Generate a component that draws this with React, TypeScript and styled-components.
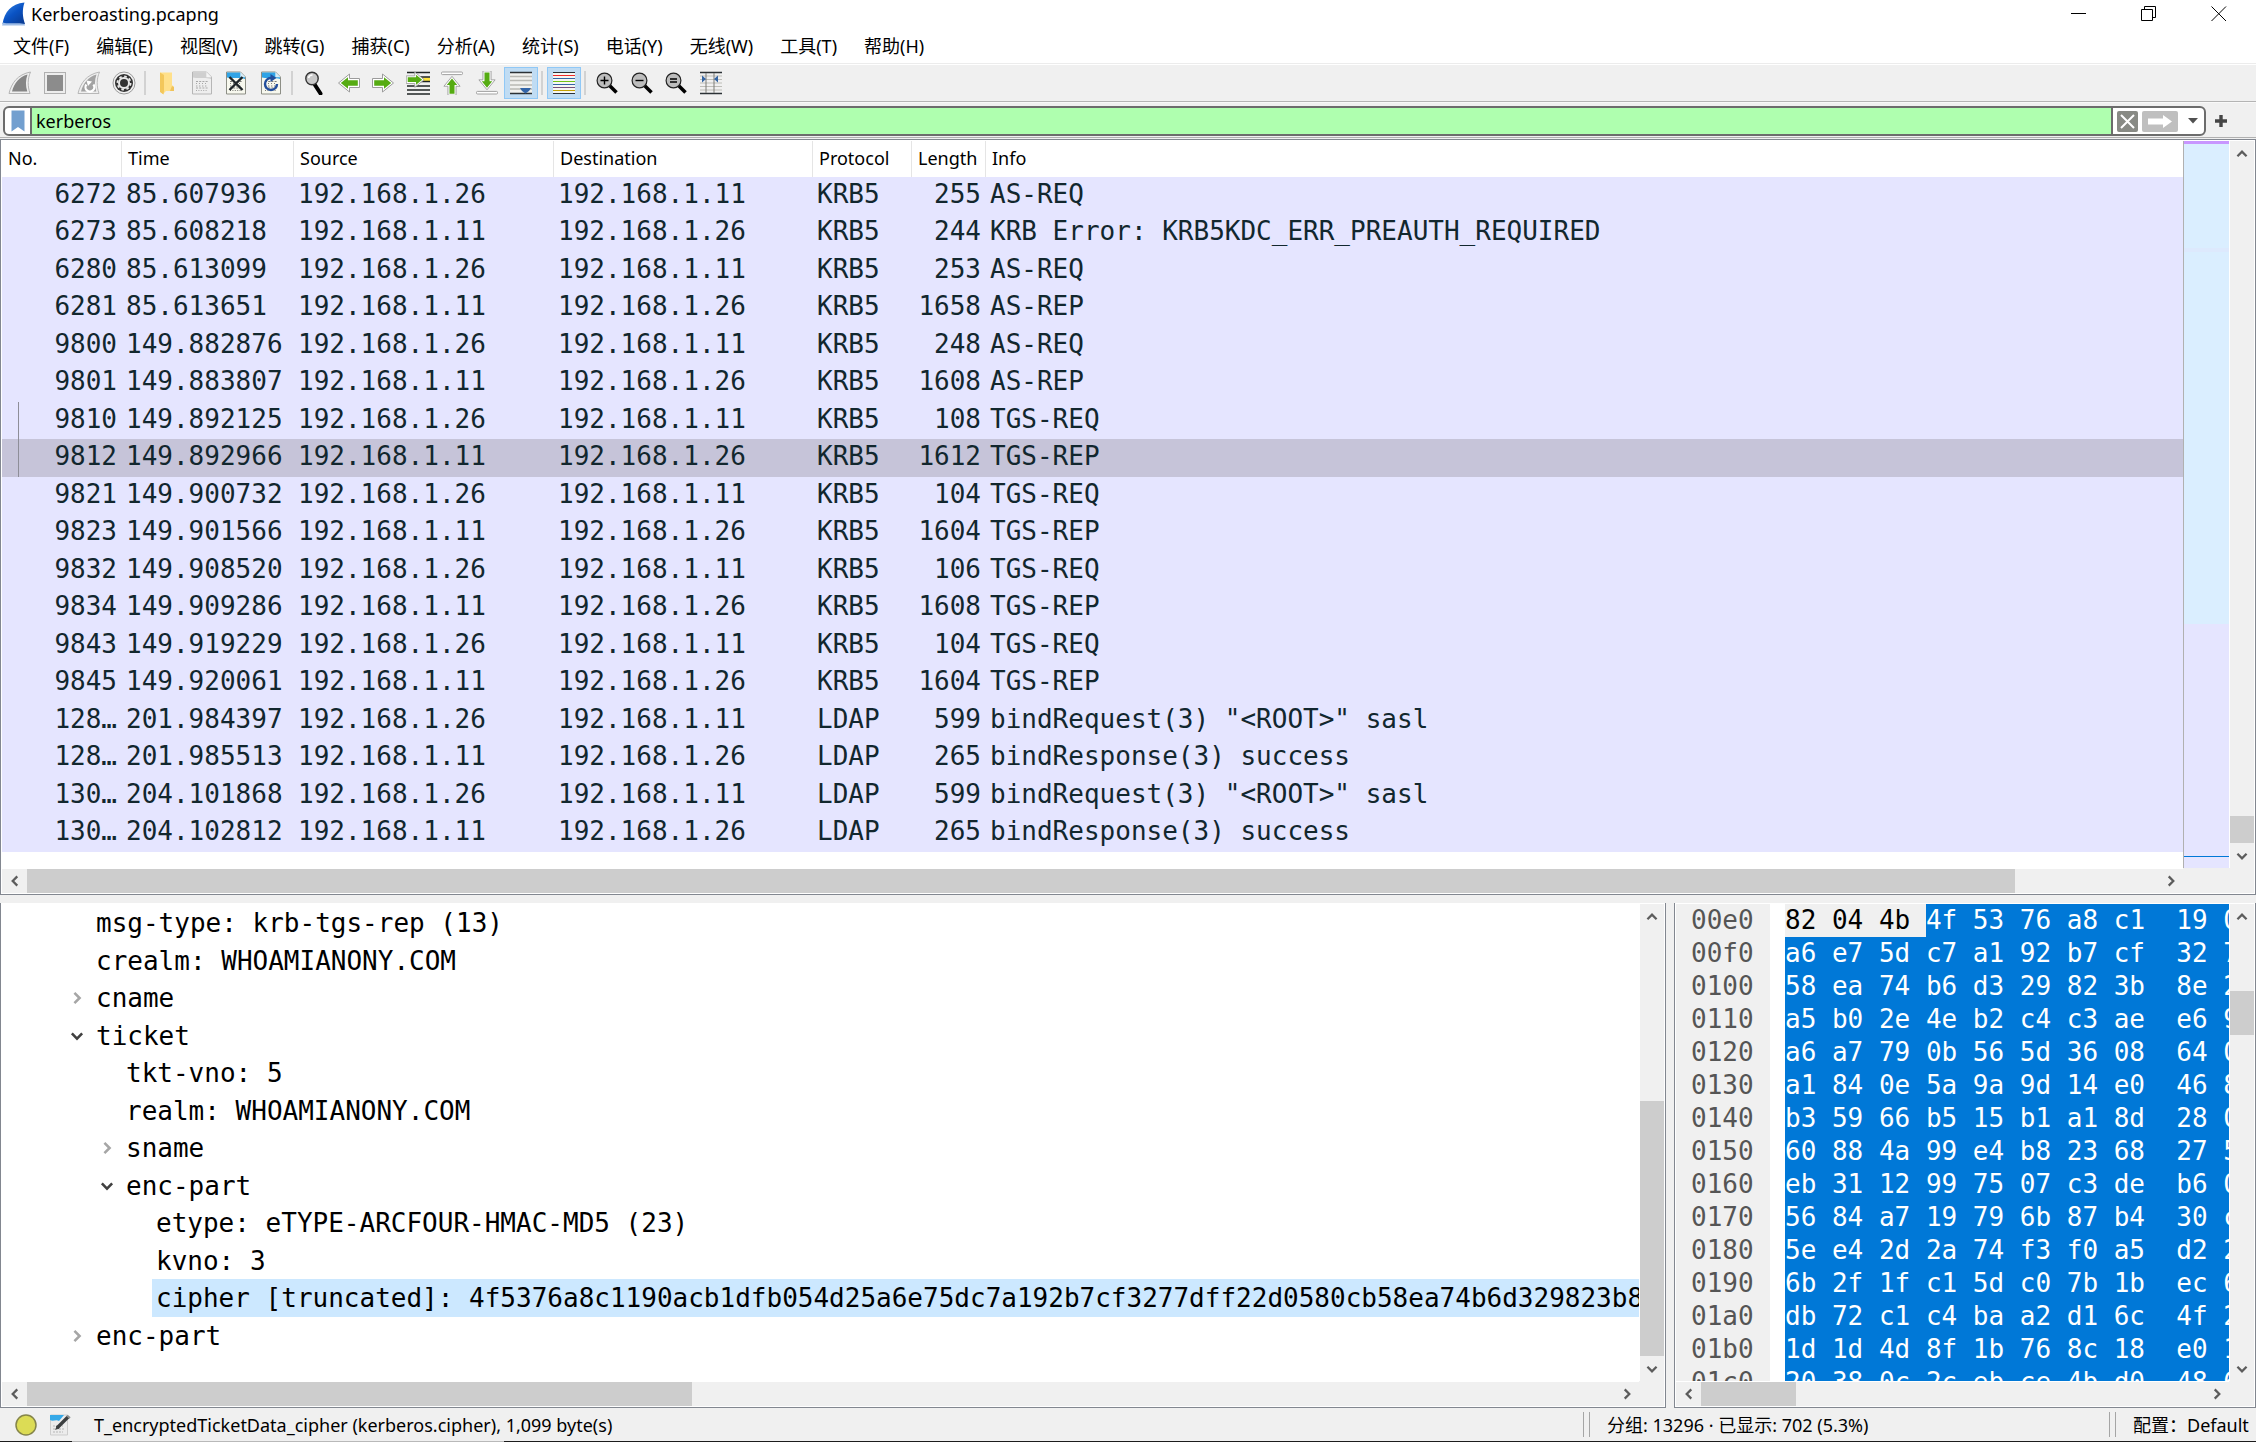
import React from 'react';
import styled, { createGlobalStyle, css } from 'styled-components';

const ui = `"Noto Sans", "Noto Sans CJK SC", sans-serif`;
const mono = `"DejaVu Sans Mono", "Noto Sans CJK SC", monospace`;

const GlobalStyle = createGlobalStyle`
  *, *::before, *::after { box-sizing: border-box; }
  body { margin: 0; background: #f0f0f0; color: #000; font-family: ${ui}; font-size: 18px; line-height: 26px; }
  button, input { font: inherit; color: inherit; }
  button { border: 0; padding: 0; background: transparent; display: flex; align-items: center; justify-content: center; }
  svg { display: block; flex: none; }
`;

const Window = styled.div`
  display: flex;
  flex-direction: column;
  height: 100vh;
  overflow: hidden;
`;

/* ---------- title bar and menu ---------- */

const TitleBar = styled.header`
  display: flex;
  align-items: center;
  height: 28px;
  flex: none;
  padding: 0 2px;
  background: #fff;
`;

const Title = styled.h1`
  flex: 1;
  margin: 0 0 0 5px;
  font-size: 18px;
  font-weight: 400;
  line-height: 26px;
`;

const WindowButton = styled.button`
  width: 70px;
  height: 28px;
`;

const MenuBar = styled.nav`
  display: flex;
  gap: 1px;
  flex: none;
  height: 36px;
  background: #fff;
  border-bottom: 1px solid #ececec;
`;

const MenuItem = styled.button`
  padding: 0 13px;
  white-space: nowrap;
`;

/* ---------- toolbar ---------- */

const ToolBar = styled.div`
  display: flex;
  align-items: center;
  flex: none;
  height: 38px;
  padding: 0 3px;
  border-top: 1px solid #fff;
  border-bottom: 1px solid #b4b4b4;
`;

const ToolGroup = styled.div`
  display: flex;
`;

const ToolButton = styled.button<{ $pressed?: boolean }>`
  width: 34px;
  height: 32px;
  border: 1px solid ${(p) => (p.$pressed ? '#90c8f6' : 'transparent')};
  background: ${(p) => (p.$pressed ? '#c0dcf3' : 'transparent')};
  &:nth-child(even) { width: 35px; }
`;

const ToolRule = styled.span`
  width: 2px;
  height: 24px;
  margin: 0 4px 0 3px;
  background: #d2d2d2;
`;

/* ---------- display filter ---------- */

const FilterBar = styled.form`
  display: flex;
  align-items: center;
  flex: none;
  height: 36px;
  padding: 2px 24px 0 3px;
  gap: 4px;
  border-top: 1px solid #f9f9f9;
  border-bottom: 1px solid #b0b0b0;
`;

const FilterBox = styled.div`
  display: flex;
  flex: 1;
  height: 30px;
  border: 2px solid #6c6c6c;
  border-radius: 6px;
  background: #fff;
  overflow: hidden;
`;

const Bookmark = styled.button`
  width: 25px;
`;

const FilterInput = styled.input`
  flex: 1;
  min-width: 0;
  padding: 0 4px;
  border: solid #6c6c6c;
  border-width: 0 2px;
  background: #afffaf;
  outline: 0;
`;

const FilterActions = styled.div`
  display: flex;
  align-items: center;
  gap: 4px;
  padding-left: 4px;
`;

const DropButton = styled.button`
  width: 22px;
  height: 22px;
`;

/* ---------- panes ---------- */

const frame = css`
  border: 1px solid #828790;
  padding: 1px;
  background: #fff;
`;

const PacketPane = styled.section`
  ${frame}
  flex: none;
  margin-top: 1px;
  display: grid;
  grid-template-columns: minmax(0, 1fr) 46px 25px;
  grid-template-rows: auto 25px;
`;

const PacketArea = styled.div`
  padding-bottom: 16px;
  overflow: hidden;
`;

const PacketTable = styled.table`
  width: 100%;
  table-layout: fixed;
  border-collapse: separate;
  border-spacing: 0;
`;

const HeadCell = styled.th`
  height: 36px;
  padding: 0 0 2px 6px;
  border-right: 1px solid #e5e5e5;
  font-weight: 400;
  text-align: left;
  white-space: nowrap;
  &:last-child { border-right: 0; }
`;

const PacketRow = styled.tr<{ $selected?: boolean }>`
  height: 37px;
  background: ${(p) => (p.$selected ? '#c6c4d9' : '#e5e5ff')};
  &:nth-child(even) { height: 38px; }
`;

const Cell = styled.td<{ $right?: boolean; $linked?: boolean }>`
  position: relative;
  padding: 0 5px 4px 4px;
  font-family: ${mono};
  font-size: 26px;
  line-height: 32px;
  color: #12272e;
  white-space: nowrap;
  overflow: hidden;
  text-align: ${(p) => (p.$right ? 'right' : 'left')};
  ${(p) => p.$linked && css`
    &::before {
      content: '';
      position: absolute;
      top: 0;
      bottom: 0;
      left: 16px;
      border-left: 1px solid #8e8e98;
    }
  `}
`;

const MiniMap = styled.div`
  display: flex;
  flex-direction: column;
  border-left: 1px solid #b0b0b0;
`;

const MapBand = styled.div<{ $color: string; $px?: number; $grow?: number }>`
  flex: ${(p) => (p.$grow ? `${p.$grow} 1 0` : `0 0 ${p.$px}px`)};
  background: ${(p) => p.$color};
`;

const LowerPanes = styled.div`
  display: grid;
  grid-template-columns: 1666fr 582fr;
  gap: 8px;
  flex: 1;
  min-height: 0;
  margin-top: 8px;
`;

const LowerPane = styled.section`
  ${frame}
  border-top: 0;
  display: grid;
  grid-template-columns: minmax(0, 1fr) 25px;
  grid-template-rows: minmax(0, 1fr) 25px;
  min-width: 0;
  min-height: 0;
`;

/* ---------- scroll bars ---------- */

const Bar = styled.div<{ $vertical?: boolean }>`
  display: flex;
  flex-direction: ${(p) => (p.$vertical ? 'column' : 'row')};
  border: solid #fff;
  border-width: ${(p) => (p.$vertical ? '0 0 0 1px' : '1px 0 0 0')};
  background: #f0f0f0;
`;

const ArrowButton = styled.button`
  flex: 0 0 25px;
`;

const Track = styled.span<{ $grow: number; $thumb?: boolean }>`
  flex: ${(p) => p.$grow} 1 0;
  background: ${(p) => (p.$thumb ? '#cdcdcd' : 'transparent')};
`;

const Corner = styled.div<{ $wide?: boolean }>`
  grid-column: ${(p) => (p.$wide ? 'span 2' : 'auto')};
  background: #f0f0f0;
`;

/* ---------- detail tree ---------- */

const Tree = styled.ul`
  margin: 0;
  padding: 0;
  list-style: none;
  overflow: hidden;
`;

const TreeRow = styled.li<{ $level: number }>`
  display: flex;
  align-items: center;
  height: 38px;
  padding-left: ${(p) => 60 + p.$level * 30}px;
  font-family: ${mono};
  font-size: 26px;
  line-height: 34px;
  white-space: pre;
  &:nth-child(even) { height: 37px; }
`;

const Toggle = styled.button`
  flex: 0 0 30px;
  height: 30px;
`;

const Indent = styled.span`
  flex: 0 0 30px;
`;

const TreeText = styled.span<{ $selected?: boolean }>`
  display: flex;
  align-items: center;
  align-self: stretch;
  flex: ${(p) => (p.$selected ? '1 0 auto' : 'none')};
  padding-left: 4px;
  background: ${(p) => (p.$selected ? '#cce8ff' : 'transparent')};
`;

/* ---------- byte view ---------- */

const ByteView = styled.div`
  display: grid;
  grid-template-columns: 94px minmax(0, 1fr);
  gap: 15px;
  min-height: 0;
  overflow: hidden;
  font-family: ${mono};
  font-size: 26px;
  line-height: 33px;
`;

const Offsets = styled.div`
  padding-left: 15px;
  background: #f0f0f0;
  color: #555;
`;

const Bytes = styled.div`
  background: #0078d7;
  color: #fff;
  white-space: pre;
  overflow: hidden;
`;

const PlainBytes = styled.span`
  display: inline-block;
  background: #f0f0f0;
  color: #000;
`;

/* ---------- status bar ---------- */

const StatusBar = styled.footer`
  display: flex;
  align-items: center;
  flex: none;
  height: 34px;
  padding: 0 7px 1px 14px;
  background: linear-gradient(to right, #1c1c1c 72px, #b9b9b9 72px 504px, #1c1c1c 504px) bottom / 100% 1px no-repeat;
  white-space: nowrap;
`;

const StatusField = styled.span`
  flex: 1 0 0;
  padding-left: 12px;
`;

const StatusIcon = styled.button`
  width: 24px;
  margin-right: 10px;
`;

const StatusSection = styled.span<{ $basis?: number }>`
  display: flex;
  gap: 17px;
  flex: 0 0 ${(p) => (p.$basis ? `${p.$basis}px` : 'auto')};
`;

const Grip = styled.span`
  width: 7px;
  height: 25px;
  border: solid #a5a5a5;
  border-width: 0 1px;
`;

/* ---------- drawings ---------- */

const Icon = ({ children, w = 24, h = 24 }: { children: React.ReactNode; w?: number; h?: number }) => (
  <svg width={w} height={h} viewBox={`0 0 ${w} ${h}`} fill="none" aria-hidden="true">{children}</svg>
);

const finPath = 'M1 22.5C3.5 12 9.5 3.5 22.5 1C19.5 8 19.5 15 22 22.5Z';
const finInner = 'M4 20.5C6.5 12 11 6 19.5 3.6C17.5 9.5 17.5 15 19.3 20.5Z';

const FinLogo = () => (
  <Icon>
    <defs>
      <linearGradient id="fin" x1="0" y1="0" x2="0.8" y2="1">
        <stop offset="0" stopColor="#3b8be8" />
        <stop offset="0.55" stopColor="#0a53c4" />
        <stop offset="1" stopColor="#0a3d96" />
      </linearGradient>
    </defs>
    <path d="M0.5 22C2.5 10 9 2 22.5 0.5C20 8 20.5 15 23 22Z" fill="url(#fin)" />
    <path d="M0 23.5L1 20.5C7 22.5 17 20 22.6 22L23 23.5Z" fill="#9dbce6" />
  </Icon>
);

const StartIcon = () => (
  <Icon>
    <path d={finPath} fill="#efefef" stroke="#b4b4b4" />
    <path d={finInner} fill="#868686" />
  </Icon>
);

const StopIcon = () => (
  <Icon>
    <rect x="1.5" y="1.5" width="21" height="21" fill="#ededed" stroke="#b0b0b0" />
    <rect x="4" y="4" width="16" height="16" fill="#8c8c8c" />
  </Icon>
);

const RestartIcon = () => (
  <Icon>
    <path d={finPath} fill="#efefef" stroke="#b8b8b8" />
    <path d={finInner} fill="#a3a3a3" />
    <path d="M9.4 13.5A4.4 4.4 0 1 0 16.4 13.5" stroke="#fff" strokeWidth="2.2" />
    <path d="M9.5 9.5L15 10.5L11 15Z" fill="#fff" />
  </Icon>
);

const OptionsIcon = () => (
  <Icon>
    <circle cx="12" cy="12" r="11" fill="#f2f2f2" stroke="#9b9b9b" />
    <circle cx="12" cy="12" r="9" fill="#333" />
    <circle cx="12" cy="12" r="5" stroke="#e8e8e8" strokeWidth="2" />
    <circle cx="12" cy="12" r="6.6" stroke="#e8e8e8" strokeWidth="1.8" strokeDasharray="2.6 2.58" />
  </Icon>
);

const FolderIcon = () => (
  <Icon>
    <path d="M5 1.5H17V14L19 16V20H11L8 23L5 20Z" fill="#ffe08a" />
    <path d="M9 4L5 1.5V21L8.5 23.5L9 20Z" fill="#f3c75b" />
    <path d="M17 15L19 16V20H15Z" fill="#f0c35a" />
  </Icon>
);

const Digits = ({ color }: { color: string }) => (
  <g stroke={color} strokeWidth="1.2">
    <path d="M6 10.5H18" strokeDasharray="2 1.2" />
    <path d="M6 12.5H18" strokeDasharray="1 2" />
    <path d="M6 15H18" strokeDasharray="1.4 1.6" />
    <path d="M6 17H18" strokeDasharray="2 1.2" />
    <path d="M6 19.5H18" strokeDasharray="1 1.4" />
  </g>
);

const Sheet = ({ blue, children }: { blue?: boolean; children?: React.ReactNode }) => (
  <Icon>
    <path d="M2.5 1H16.5L21.5 6V23H2.5Z" fill={blue ? '#f7f8ee' : '#eeeeee'} stroke={blue ? '#8d8f86' : '#b6b6b6'} />
    <path d="M3 1.5H16.3L21 6.2V8C15 6 9 8 3 6.5Z" fill={blue ? '#2fa3e6' : '#cfcfcf'} />
    <path d="M16.3 1L21.5 6.3H16.3Z" fill={blue ? '#d8ecf7' : '#f4f4f4'} />
    <Digits color={blue ? '#7d7d78' : '#a8a8a8'} />
    {children}
  </Icon>
);

const CloseFileIcon = () => (
  <Sheet blue><path d="M5.5 6L18.5 19M18.5 6L5.5 19" stroke="#1e2428" strokeWidth="2.4" /></Sheet>
);

const ReloadIcon = () => (
  <Sheet blue>
    <path d="M12 7A6 6 0 1 0 18 13" stroke="#234f9c" strokeWidth="2.4" />
    <path d="M11.5 3L17.5 7L11.5 11Z" fill="#234f9c" />
  </Sheet>
);

const Lens = ({ children }: { children?: React.ReactNode }) => (
  <Icon>
    <path d="M14 14L21.5 21.5" stroke="#000" strokeWidth="3.6" />
    <circle cx="9.5" cy="9.5" r="7.4" fill="#bdbdbd" stroke="#222" strokeWidth="1.2" />
    <g stroke="#000" strokeWidth="1.4">{children}</g>
  </Icon>
);

const FindIcon = () => (
  <Icon>
    <path d="M13 14L18.5 22.5" stroke="#000" strokeWidth="4" strokeLinecap="round" />
    <circle cx="10" cy="7.5" r="6.2" fill="#c9c9c9" stroke="#333" strokeWidth="1.4" />
    <path d="M6.5 7C7 5 8.5 4 10.5 4" stroke="#fff" strokeWidth="1.6" />
  </Icon>
);

const arrowRight = 'M1.5 7.5H11.5V3L22.5 12L11.5 21V16.5H1.5Z';
const arrowRightIn = 'M3.2 9.2H13V6.2L20.2 12L13 17.800V14.800H3.2Z';

const Arrow = ({ turn = 0 }: { turn?: number }) => (
  <g transform={`rotate(${turn} 12 12)`}>
    <path d={arrowRight} fill="#fff" stroke="#9c9c9c" />
    <path d={arrowRightIn} fill="#55ab12" />
  </g>
);

const BackIcon = () => <Icon><Arrow turn={180} /></Icon>;
const ForwardIcon = () => <Icon><Arrow /></Icon>;

const GotoIcon = () => (
  <Icon>
    <rect x="16" y="6.5" width="8" height="4" fill="#ffe43f" />
    <path d="M1 1.5H24M1 6H24M1 10.5H24M1 15H24M1 19H24M1 23H24" stroke="#1f2425" strokeWidth="1.4" />
    <g transform="translate(-1 -1.500) scale(0.85)">
      <path d={arrowRight} fill="#fff" stroke="#9c9c9c" />
      <path d={arrowRightIn} fill="#55ab12" />
    </g>
  </Icon>
);

const FirstIcon = () => (
  <Icon>
    <rect x="1.5" y="1" width="21" height="2.6" rx="1" fill="#fff" stroke="#a0a0a0" />
    <g transform="translate(1.200 4) scale(0.9)"><Arrow turn={-90} /></g>
  </Icon>
);

const LastIcon = () => (
  <Icon>
    <rect x="1.5" y="20.4" width="21" height="2.6" rx="1" fill="#fff" stroke="#a0a0a0" />
    <g transform="translate(1.200 -1.500) scale(0.9)"><Arrow turn={90} /></g>
  </Icon>
);

const AutoScrollIcon = () => (
  <Icon>
    <rect x="1" y="1" width="22" height="22" fill="#f1f1ee" />
    <path d="M1 1.5H23M1 22.5H23" stroke="#2b3135" strokeWidth="1.4" />
    <path d="M1 5.5H23M1 9.5H23M1 14H23M1 18H23" stroke="#b9b9b4" strokeWidth="1.4" />
    <path d="M11 17H22L20 20L16.500 22.500L13 20Z" fill="#3365a8" />
  </Icon>
);

const ColorizeIcon = () => (
  <Icon>
    <rect x="1" y="1" width="22" height="22" fill="#f6f6f3" />
    {['#2b3135', '#ef2929', '#3465a4', '#73c216', '#3465a4', '#75507b', '#c4a000', '#2b3135'].map((c, i) => (
      <path key={i} d={`M1 ${1.5 + i * 3}H23`} stroke={c} strokeWidth="1" />
    ))}
  </Icon>
);

const ColumnsIcon = () => (
  <Icon>
    <path d="M1 1.5H23M1 22.5H23" stroke="#2b3135" strokeWidth="1.4" />
    <path d="M1 5H23M1 8.500H23M1 12H23M1 15.500H23M1 19H23" stroke="#bdbdb8" strokeWidth="1.2" />
    <path d="M7 2V22M15 2V22" stroke="#7c7c78" strokeWidth="1" />
    <path d="M3 4.500L7 8L3 11.500ZM19 4.500L15 8L19 11.500Z" fill="#3465a4" />
  </Icon>
);

const chevrons = {
  up: 'M3 9L7 5L11 9',
  down: 'M3 5L7 9L11 5',
  left: 'M9 3L5 7L9 11',
  right: 'M5 3L9 7L5 11',
};

const Chevron = ({ dir, size = 16, color = '#5c5c5c' }: { dir: keyof typeof chevrons; size?: number; color?: string }) => (
  <svg width={size} height={size} viewBox="0 0 14 14" fill="none" aria-hidden="true">
    <path d={chevrons[dir]} stroke={color} strokeWidth="2" />
  </svg>
);

/* ---------- composed parts ---------- */

type ScrollProps = { vertical?: boolean; before: number; thumb: number; after: number };

const ScrollBar = ({ vertical, before, thumb, after }: ScrollProps) => (
  <Bar $vertical={vertical}>
    <ArrowButton type="button" aria-label={vertical ? 'Scroll up' : 'Scroll left'}>
      <Chevron dir={vertical ? 'up' : 'left'} />
    </ArrowButton>
    <Track $grow={before} />
    <Track $grow={thumb} $thumb />
    <Track $grow={after} />
    <ArrowButton type="button" aria-label={vertical ? 'Scroll down' : 'Scroll right'}>
      <Chevron dir={vertical ? 'down' : 'right'} />
    </ArrowButton>
  </Bar>
);

const menus = ['文件(F)', '编辑(E)', '视图(V)', '跳转(G)', '捕获(C)', '分析(A)', '统计(S)', '电话(Y)', '无线(W)', '工具(T)', '帮助(H)'];

type Tool = { label: string; icon: React.ReactNode; pressed?: boolean };

const toolGroups: Tool[][] = [
  [
    { label: 'Start capture', icon: <StartIcon /> },
    { label: 'Stop capture', icon: <StopIcon /> },
    { label: 'Restart capture', icon: <RestartIcon /> },
    { label: 'Capture options', icon: <OptionsIcon /> },
  ],
  [
    { label: 'Open', icon: <FolderIcon /> },
    { label: 'Save', icon: <Sheet /> },
    { label: 'Close file', icon: <CloseFileIcon /> },
    { label: 'Reload', icon: <ReloadIcon /> },
  ],
  [
    { label: 'Find packet', icon: <FindIcon /> },
    { label: 'Previous packet', icon: <BackIcon /> },
    { label: 'Next packet', icon: <ForwardIcon /> },
    { label: 'Go to packet', icon: <GotoIcon /> },
    { label: 'First packet', icon: <FirstIcon /> },
    { label: 'Last packet', icon: <LastIcon /> },
    { label: 'Auto scroll', icon: <AutoScrollIcon />, pressed: true },
  ],
  [{ label: 'Colorize', icon: <ColorizeIcon />, pressed: true }],
  [
    { label: 'Zoom in', icon: <Lens><path d="M5.500 9.500H13.500M9.500 5.500V13.500" /></Lens> },
    { label: 'Zoom out', icon: <Lens><path d="M5.500 9.500H13.500" /></Lens> },
    { label: 'Normal size', icon: <Lens><path d="M6 8H13M6 11H13" /></Lens> },
    { label: 'Resize columns', icon: <ColumnsIcon /> },
  ],
];

const A = '192.168.1.26';
const B = '192.168.1.11';

const packets: [string, string, string, string, string, string, string][] = [
  ['6272', '85.607936', A, B, 'KRB5', '255', 'AS-REQ'],
  ['6273', '85.608218', B, A, 'KRB5', '244', 'KRB Error: KRB5KDC_ERR_PREAUTH_REQUIRED'],
  ['6280', '85.613099', A, B, 'KRB5', '253', 'AS-REQ'],
  ['6281', '85.613651', B, A, 'KRB5', '1658', 'AS-REP'],
  ['9800', '149.882876', A, B, 'KRB5', '248', 'AS-REQ'],
  ['9801', '149.883807', B, A, 'KRB5', '1608', 'AS-REP'],
  ['9810', '149.892125', A, B, 'KRB5', '108', 'TGS-REQ'],
  ['9812', '149.892966', B, A, 'KRB5', '1612', 'TGS-REP'],
  ['9821', '149.900732', A, B, 'KRB5', '104', 'TGS-REQ'],
  ['9823', '149.901566', B, A, 'KRB5', '1604', 'TGS-REP'],
  ['9832', '149.908520', A, B, 'KRB5', '106', 'TGS-REQ'],
  ['9834', '149.909286', B, A, 'KRB5', '1608', 'TGS-REP'],
  ['9843', '149.919229', A, B, 'KRB5', '104', 'TGS-REQ'],
  ['9845', '149.920061', B, A, 'KRB5', '1604', 'TGS-REP'],
  ['128…', '201.984397', A, B, 'LDAP', '599', 'bindRequest(3) "<ROOT>" sasl'],
  ['128…', '201.985513', B, A, 'LDAP', '265', 'bindResponse(3) success'],
  ['130…', '204.101868', A, B, 'LDAP', '599', 'bindRequest(3) "<ROOT>" sasl'],
  ['130…', '204.102812', B, A, 'LDAP', '265', 'bindResponse(3) success'],
];

const columns: [string, number | undefined][] = [
  ['No.', 120], ['Time', 172], ['Source', 260], ['Destination', 259], ['Protocol', 99], ['Length', 74], ['Info', undefined],
];

type Node = { level: number; text: string; open?: boolean; selected?: boolean };

const tree: Node[] = [
  { level: 0, text: 'msg-type: krb-tgs-rep (13)' },
  { level: 0, text: 'crealm: WHOAMIANONY.COM' },
  { level: 0, text: 'cname', open: false },
  { level: 0, text: 'ticket', open: true },
  { level: 1, text: 'tkt-vno: 5' },
  { level: 1, text: 'realm: WHOAMIANONY.COM' },
  { level: 1, text: 'sname', open: false },
  { level: 1, text: 'enc-part', open: true },
  { level: 2, text: 'etype: eTYPE-ARCFOUR-HMAC-MD5 (23)' },
  { level: 2, text: 'kvno: 3' },
  { level: 2, text: 'cipher [truncated]: 4f5376a8c1190acb1dfb054d25a6e75dc7a192b7cf3277dff22d0580cb58ea74b6d329823b8', selected: true },
  { level: 0, text: 'enc-part', open: false },
];

const hexRows: [string, string][] = [
  ['00e0', '4f 53 76 a8 c1  19 0'],
  ['00f0', 'a6 e7 5d c7 a1 92 b7 cf  32 7'],
  ['0100', '58 ea 74 b6 d3 29 82 3b  8e 2'],
  ['0110', 'a5 b0 2e 4e b2 c4 c3 ae  e6 9'],
  ['0120', 'a6 a7 79 0b 56 5d 36 08  64 0'],
  ['0130', 'a1 84 0e 5a 9a 9d 14 e0  46 8'],
  ['0140', 'b3 59 66 b5 15 b1 a1 8d  28 0'],
  ['0150', '60 88 4a 99 e4 b8 23 68  27 5'],
  ['0160', 'eb 31 12 99 75 07 c3 de  b6 0'],
  ['0170', '56 84 a7 19 79 6b 87 b4  30 c'],
  ['0180', '5e e4 2d 2a 74 f3 f0 a5  d2 2'],
  ['0190', '6b 2f 1f c1 5d c0 7b 1b  ec 6'],
  ['01a0', 'db 72 c1 c4 ba a2 d1 6c  4f 2'],
  ['01b0', '1d 1d 4d 8f 1b 76 8c 18  e0 1'],
  ['01c0', '20 38 0c 2c eb ce 4b d0  48 6'],
];

export default function App() {
  return (
    <Window>
      <GlobalStyle />
      <TitleBar>
        <FinLogo />
        <Title>Kerberoasting.pcapng</Title>
        <WindowButton aria-label="Minimize"><Icon w={16} h={16}><path d="M0 7.500H15" stroke="#000" /></Icon></WindowButton>
        <WindowButton aria-label="Restore">
          <Icon w={16} h={16}><path d="M0.500 3.500H11.500V14.500H0.500ZM3.500 3.500V0.500H14.500V11.500H11.500" stroke="#000" /></Icon>
        </WindowButton>
        <WindowButton aria-label="Close"><Icon w={16} h={16}><path d="M0.500 0.500L15 15M15 0.500L0.500 15" stroke="#000" /></Icon></WindowButton>
      </TitleBar>

      <MenuBar>
        {menus.map((m) => <MenuItem key={m}>{m}</MenuItem>)}
      </MenuBar>

      <ToolBar role="toolbar">
        {toolGroups.map((group, i) => (
          <React.Fragment key={i}>
            {i > 0 && <ToolRule />}
            <ToolGroup>
              {group.map((t) => (
                <ToolButton key={t.label} type="button" aria-label={t.label} $pressed={t.pressed}>{t.icon}</ToolButton>
              ))}
            </ToolGroup>
          </React.Fragment>
        ))}
      </ToolBar>

      <FilterBar onSubmit={(e) => e.preventDefault()}>
        <FilterBox>
          <Bookmark type="button" aria-label="Filter bookmarks">
            <Icon w={14} h={22}><path d="M0.500 0.500H13.500V21.500L7 17L0.500 21.500Z" fill="#729fcf" /></Icon>
          </Bookmark>
          <FilterInput aria-label="Display filter" defaultValue="kerberos" />
          <FilterActions>
            <button type="button" aria-label="Clear filter">
              <Icon w={21} h={21}>
                <rect width="21" height="21" rx="2" fill="#888a85" />
                <path d="M4 4L17 17M17 4L4 17" stroke="#fff" strokeWidth="2" />
              </Icon>
            </button>
            <button type="submit" aria-label="Apply filter">
              <Icon w={36} h={21}>
                <rect width="36" height="21" rx="2" fill="#bfbfbf" />
                <path d="M6 7.500H21V4L30 10.500L21 17V13.500H6Z" fill="#fff" />
              </Icon>
            </button>
            <DropButton type="button" aria-label="Filter history">
              <Icon w={10} h={6}><path d="M0 0H10L5 5.500Z" fill="#505050" /></Icon>
            </DropButton>
          </FilterActions>
        </FilterBox>
        <DropButton type="button" aria-label="Add filter button">
          <Icon w={12} h={12}><path d="M0 6H12M6 0V12" stroke="#454545" strokeWidth="3.400" /></Icon>
        </DropButton>
      </FilterBar>

      <PacketPane>
        <PacketArea>
          <PacketTable>
            <colgroup>
              {columns.map(([name, width]) => <col key={name} width={width} />)}
            </colgroup>
            <thead>
              <tr>{columns.map(([name]) => <HeadCell key={name} scope="col">{name}</HeadCell>)}</tr>
            </thead>
            <tbody>
              {packets.map((p, r) => (
                <PacketRow key={r} $selected={p[0] === '9812'}>
                  {p.map((value, c) => (
                    <Cell key={c} $right={c === 0 || c === 5} $linked={c === 0 && (p[0] === '9810' || p[0] === '9812')}>{value}</Cell>
                  ))}
                </PacketRow>
              ))}
            </tbody>
          </PacketTable>
        </PacketArea>
        <MiniMap>
          <MapBand $color="#c896ff" $px={3} />
          <MapBand $color="#daeeff" $grow={104} />
          <MapBand $color="#dde9fd" $px={4} />
          <MapBand $color="#daeeff" $grow={372} />
          <MapBand $color="#e5e5ff" $grow={232} />
          <MapBand $color="#0078d7" $px={1} />
          <MapBand $color="#e5e5ff" $px={11} />
        </MiniMap>
        <ScrollBar vertical before={650} thumb={27} after={0} />
        <ScrollBar before={0} thumb={1988} after={143} />
        <Corner $wide />
      </PacketPane>

      <LowerPanes>
        <LowerPane>
          <Tree>
            {tree.map((n, i) => (
              <TreeRow key={i} $level={n.level}>
                {n.open === undefined ? (
                  <Indent />
                ) : (
                  <Toggle type="button" aria-label={n.text} aria-expanded={n.open}>
                    <Chevron size={18} dir={n.open ? 'down' : 'right'} color={n.open ? '#404040' : '#a6a6a6'} />
                  </Toggle>
                )}
                <TreeText $selected={n.selected}>{n.text}</TreeText>
              </TreeRow>
            ))}
          </Tree>
          <ScrollBar vertical before={172} thumb={255} after={0} />
          <ScrollBar before={0} thumb={666} after={923} />
          <Corner />
        </LowerPane>

        <LowerPane>
          <ByteView>
            <Offsets>{hexRows.map(([offset]) => <div key={offset}>{offset}</div>)}</Offsets>
            <Bytes>
              {hexRows.map(([offset, bytes], i) => (
                <div key={offset}>{i === 0 && <PlainBytes>{'82 04 4b '}</PlainBytes>}{bytes}</div>
              ))}
            </Bytes>
          </ByteView>
          <ScrollBar vertical before={62} thumb={44} after={321} />
          <ScrollBar before={0} thumb={95} after={408} />
          <Corner />
        </LowerPane>
      </LowerPanes>

      <StatusBar>
        <StatusIcon aria-label="Expert information">
          <Icon w={22} h={22}><circle cx="11" cy="11" r="10" fill="#dcdc55" stroke="#85854a" strokeWidth="1.500" /></Icon>
        </StatusIcon>
        <StatusIcon aria-label="Capture comments">
          <Icon w={22} h={22}>
            <path d="M1.500 1H18.500V21H1.500Z" fill="#ececec" stroke="#cdcdcd" />
            <path d="M1 1H15L10 7C7 5 4 8 1 6Z" fill="#36a9e8" />
            <path d="M4 12H14M4 15H16M4 18H14" stroke="#b5b5b5" strokeDasharray="2 1" />
            <path d="M8 14L19 3" stroke="#3c3f40" strokeWidth="3.400" />
            <path d="M6 16L10.500 14L8 11.500Z" fill="#3c3f40" />
            <path d="M18 1.500L21 4" stroke="#8b8d8e" strokeWidth="2" />
          </Icon>
        </StatusIcon>
        <StatusField>T_encryptedTicketData_cipher (kerberos.cipher), 1,099 byte(s)</StatusField>
        <StatusSection $basis={526}><Grip />分组: 13296 · 已显示: 702 (5.3%)</StatusSection>
        <StatusSection $basis={140}><Grip />配置：Default</StatusSection>
      </StatusBar>
    </Window>
  );
}
